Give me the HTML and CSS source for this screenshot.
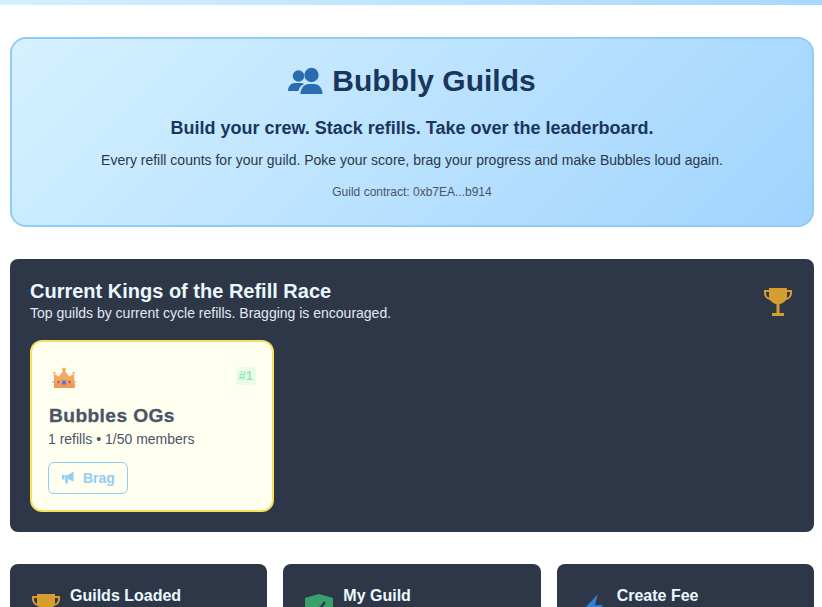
FILE: index.html
```html
<!DOCTYPE html>
<html lang="en">
<head>
<meta charset="utf-8">
<title>Bubbly Guilds</title>
<link rel="stylesheet" href="styles.css">
</head>
<body>
<div class="topbar"></div>
<main class="page">
  <section class="hero">
    <h1 class="hero-title">
      <svg class="hero-icon" viewBox="0 0 35 28" aria-hidden="true">
        <circle cx="10.500" cy="9" r="5.800"/><circle cx="23.500" cy="8" r="7.200"/>
        <path d="M0 24c0-4.500 3-8 7-8h5.500c1.500 0 2.500.3 3.500 1-3 1.500-5 3.500-5.500 7z"/>
        <path d="M12.500 27c0-6 4-10 8-10h6c4 0 8 4 8 10z"/>
      </svg>
      Bubbly Guilds
    </h1>
    <p class="hero-tagline">Build your crew. Stack refills. Take over the leaderboard.</p>
    <p class="hero-text">Every refill counts for your guild. Poke your score, brag your progress and make Bubbles loud again.</p>
    <p class="hero-contract">Guild contract: 0xb7EA...b914</p>
  </section>

  <section class="kings">
    <div class="kings-head">
      <div>
        <h2 class="kings-title">Current Kings of the Refill Race</h2>
        <p class="kings-sub">Top guilds by current cycle refills. Bragging is encouraged.</p>
      </div>
      <svg class="trophy" viewBox="0 0 28 28" aria-hidden="true"><path fill-rule="evenodd" d="M5 0h18v2h5v3c0 3-2 6-6 7-1.500 2-3.500 3.500-6.500 4.300V25H20v3H8v-3h4.500v-8.700C9.500 15.500 7.500 14 6 12 2 11 0 8 0 5V2h5V0zM2 4v1c0 2 1 3.800 3 4.800C5 8 5 6 5 4H2zm24 0h-3c0 2 0 4 0 5.800 2-1 3-2.800 3-4.800V4z"/></svg>
    </div>
    <article class="guild-card">
      <div class="guild-top">
        <svg class="crown" viewBox="0 0 26 22" aria-hidden="true">
          <circle cx="3.500" cy="6" r="1.500" fill="#ecca88"/><circle cx="13" cy="2.500" r="1.900" fill="#e8b84e"/><circle cx="22.500" cy="6" r="1.500" fill="#ecca88"/>
          <path fill="#f2a860" d="M3 7l5 2.500L12 4h2l4 5.500L23 7l1 14H3z"/>
          <path fill="#ee9a55" d="M3 16h20l1 5H3z"/>
          <circle cx="7.500" cy="15" r="1.300" fill="#e2455f"/><circle cx="13" cy="15.500" r="2.200" fill="#3f82e6"/><circle cx="18.500" cy="15" r="1.300" fill="#e2455f"/>
          <circle cx="2.200" cy="15" r="1" fill="#8cc8f0"/><circle cx="23.800" cy="15" r="1" fill="#8cc8f0"/>
        </svg>
        <span class="rank">#1</span>
      </div>
      <h3 class="guild-name">Bubbles OGs</h3>
      <p class="guild-meta">1 refills • 1/50 members</p>
      <button class="brag" type="button">
        <svg class="brag-icon" viewBox="0 0 14 12" aria-hidden="true"><path d="M1 3h2.500v4.500H1zM4 3h2.800v8.500H4.500zM7 3l5.500-3.500v10L7 7z"/></svg>
        Brag
      </button>
    </article>
  </section>

  <section class="stats">
    <article class="stat">
      <svg class="stat-icon gold" viewBox="0 0 28 28" aria-hidden="true"><path fill-rule="evenodd" d="M5 0h18v2h5v3c0 3-2 6-6 7-1.500 2-3.500 3.500-6.500 4.300V25H20v3H8v-3h4.500v-8.700C9.500 15.500 7.500 14 6 12 2 11 0 8 0 5V2h5V0zM2 4v1c0 2 1 3.800 3 4.800C5 8 5 6 5 4H2zm24 0h-3c0 2 0 4 0 5.800 2-1 3-2.800 3-4.800V4z"/></svg>
      <h4 class="stat-title">Guilds Loaded</h4>
    </article>
    <article class="stat">
      <svg class="stat-icon green" viewBox="0 0 28 28" aria-hidden="true"><path d="M14 0l14 4v9c0 8-6 13-14 15C6 26 0 21 0 13V4z"/><path class="shield-check" d="M8 14l4 4 8-10"/></svg>
      <h4 class="stat-title">My Guild</h4>
    </article>
    <article class="stat">
      <svg class="stat-icon blue" viewBox="0 0 28 28" aria-hidden="true"><path d="M19 0L4 16h8l-3 12 15-17h-8z"/></svg>
      <h4 class="stat-title">Create Fee</h4>
    </article>
  </section>
</main>
</body>
</html>
```

FILE: styles.css
```css
* { box-sizing: border-box; }
html, body { margin: 0; height: 607px; overflow: hidden; }
body { background: #fff; font-family: "Liberation Sans", Arial, sans-serif; color: #2d3748; }
.topbar { height: 5px; background: linear-gradient(90deg, #d4f0ff, #a8d8ff); }
.page { padding: 32px 8px 0 10px; }

.hero {
  height: 190px;
  padding: 24px 20px 0;
  border: 2px solid #90cdf4;
  border-radius: 16px;
  background: linear-gradient(135deg, #d6f1ff, #a0d4fe);
  text-align: center;
}
.hero-title {
  display: flex; justify-content: center; align-items: center; gap: 9px;
  margin: 0; font-size: 30px; line-height: 36px; font-weight: 700; color: #1a365d;
}
.hero-icon { width: 35px; height: 28px; fill: #2b6cb0; }
.hero-tagline { margin: 18px 0 0; font-size: 18px; line-height: 22px; font-weight: 700; color: #1a365d; }
.hero-text { margin: 11px 0 0; font-size: 14px; line-height: 20px; color: #2d3748; }
.hero-contract { margin: 14px 0 0; font-size: 12px; line-height: 16px; color: #4a5568; }

.kings {
  height: 273px; margin-top: 32px; padding: 20px;
  background: #2d3748; border-radius: 8px;
}
.kings-head { display: flex; justify-content: space-between; align-items: flex-start; }
.kings-title { margin: 0; font-size: 20px; line-height: 24px; font-weight: 700; color: #ebf8ff; }
.kings-sub { margin: 0; font-size: 14px; line-height: 20px; color: #e2e8f0; }
.trophy { width: 28px; height: 28px; margin: 9px 2px 0 0; fill: #d69e2e; }

.guild-card {
  width: 244px; height: 172px; margin-top: 17px; padding: 25px 16px 0;
  background: #fffff0; border: 2px solid #f6e05e; border-radius: 12px;
}
.guild-top { display: flex; justify-content: space-between; align-items: center; height: 22px; }
.crown { width: 26px; height: 22px; margin-left: 3px; }
.rank {
  margin-top: -4px; padding: 1px 3px; border-radius: 3px; background: #e9fbe9;
  font-size: 13px; line-height: 16px; font-weight: 700; color: #9ae6b4;
}
.guild-name {
  margin: 16px 0 0; padding-left: 1px; font-size: 19.200px; line-height: 22px; font-weight: 700; color: #4a5568;
  letter-spacing: 0.4px; -webkit-text-stroke: 0.3px #4a5568;
}
.guild-meta { margin: 3px 0 0; font-size: 14px; line-height: 18px; color: #4a5568; }
.brag {
  display: flex; align-items: center; gap: 8px;
  width: 80px; height: 32px; margin-top: 14px; padding: 0 12px;
  background: transparent; border: 1px solid #90cdf4; border-radius: 6px;
  font: 700 14px "Liberation Sans", Arial, sans-serif; color: #90cdf4;
}
.brag-icon { flex: none; width: 14px; height: 12px; fill: #90cdf4; overflow: visible; }

.stats { display: grid; grid-template-columns: repeat(3, 1fr); gap: 16px; margin-top: 32px; }
.stat {
  display: flex; gap: 10px; height: 100px; padding: 22px 22px 0;
  background: #2d3748; border-radius: 8px;
}
.stat-icon { flex: none; width: 28px; height: 28px; margin-top: 8px; }
.gold { fill: #d69e2e; }
.green { fill: #38a169; }
.blue { fill: #3182ce; }
.shield-check { fill: none; stroke: #2d3748; stroke-width: 2.5; }
.stat-title { margin: 1px 0 0; font-size: 16px; line-height: 18px; font-weight: 700; color: #ebf8ff; }
```
